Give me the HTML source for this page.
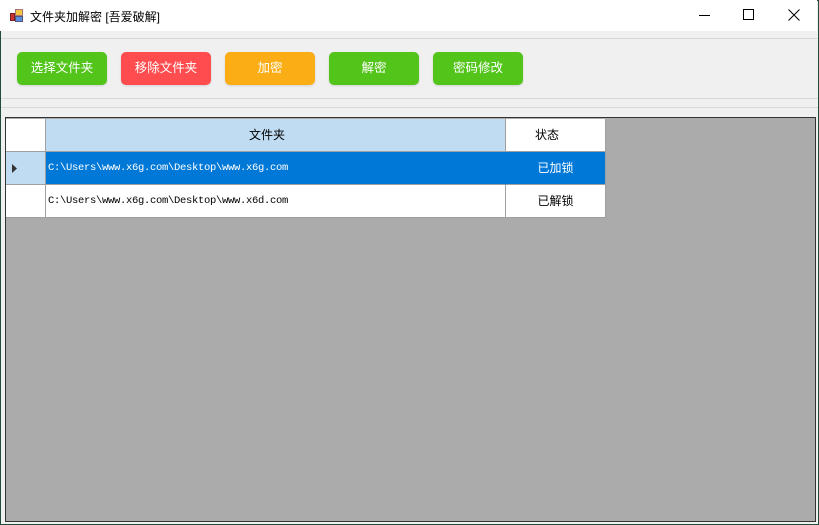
<!DOCTYPE html>
<html><head><meta charset="utf-8"><style>
*{margin:0;padding:0;box-sizing:border-box}
body{width:819px;height:525px;overflow:hidden;background:#f0f0f0;font-family:"Liberation Sans","Noto Sans CJK SC",sans-serif;font-size:12px;position:relative}
.win{position:absolute;left:0;top:0;width:819px;height:525px;border:1px solid #1f4e3d;}
.title{position:absolute;left:0;top:0;width:817px;height:31px;background:#fff}
.title .t{position:absolute;left:30px;top:8px;font-size:12px;color:#000}
.ic{position:absolute;left:10px;top:9px;width:14px;height:13px}
.btn{position:absolute;top:52px;width:90px;height:33px;border-radius:5px;color:#fff;font-size:12.5px;text-align:center;line-height:33px;box-shadow:0 1px 2px rgba(0,0,0,.12)}
.g{background:#52c41a}.r{background:#ff4d4f}.o{background:#faad14}
.hl{position:absolute;left:1px;width:817px;height:1px;background:#d9d9d9}
.grid{position:absolute;left:5px;top:117px;width:811px;height:405px;background:#ababab;border:1px solid #333}
.c{position:absolute;background:#fff;border-right:1px solid #a0a0a0;border-bottom:1px solid #a0a0a0}
.mono{font-family:"Liberation Mono",monospace;font-size:10.5px;line-height:32px;padding-left:2px;letter-spacing:-0.3px}
.ctr{text-align:center;line-height:31px;font-size:12px}
</style></head><body>
<div class="win"></div>
<div class="title">
 <div class="ic"><div style="position:absolute;left:0;top:4px;width:5px;height:8px;background:#c33;border:1px solid #722"></div><div style="position:absolute;left:5px;top:0;width:8px;height:7px;background:#f5c542;border:1px solid #a77"></div><div style="position:absolute;left:5px;top:7px;width:8px;height:6px;background:#5a8ee0;border:1px solid #557"></div></div>
 <div class="t">文件夹加解密 [吾爱破解]</div>
 <div style="position:absolute;left:699px;top:15px;width:11px;height:1px;background:#000"></div>
 <div style="position:absolute;left:743px;top:9px;width:11px;height:11px;border:1px solid #000"></div>
 <svg style="position:absolute;left:788px;top:9px" width="12" height="12"><path d="M0.5 0.5L11.5 11.5M11.5 0.5L0.5 11.5" stroke="#000" stroke-width="1"/></svg>
</div>
<div class="hl" style="top:38px"></div>
<div class="btn g" style="left:17px">选择文件夹</div>
<div class="btn r" style="left:121px">移除文件夹</div>
<div class="btn o" style="left:225px">加密</div>
<div class="btn g" style="left:329px">解密</div>
<div class="btn g" style="left:433px">密码修改</div>
<div class="hl" style="top:98px"></div>
<div class="hl" style="top:107px"></div>
<div class="grid">
 <div class="c" style="left:0;top:1px;width:40px;height:33px"></div>
 <div class="c ctr" style="left:40px;top:1px;width:460px;height:33px;background:#bfdcf2;line-height:32px;padding-right:17px">文件夹</div>
 <div class="c ctr" style="left:500px;top:1px;width:100px;height:33px;line-height:32px;padding-right:17px">状态</div>
 <div class="c" style="left:0;top:34px;width:40px;height:33px;background:#bfdcf2"><svg style="position:absolute;left:6px;top:12px" width="6" height="9"><path d="M0 0L5 4.5L0 9Z" fill="#333"/></svg></div>
 <div class="c mono" style="left:40px;top:34px;width:460px;height:33px;background:#0078d7;color:#fff;border-right-color:#0078d7">C:\Users\www.x6g.com\Desktop\www.x6g.com</div>
 <div class="c ctr" style="left:500px;top:34px;width:100px;height:33px;background:#0078d7;color:#fff;line-height:32px">已加锁</div>
 <div class="c" style="left:0;top:67px;width:40px;height:33px"></div>
 <div class="c mono" style="left:40px;top:67px;width:460px;height:33px">C:\Users\www.x6g.com\Desktop\www.x6d.com</div>
 <div class="c ctr" style="left:500px;top:67px;width:100px;height:33px;line-height:32px">已解锁</div>
</div>
</body></html>
